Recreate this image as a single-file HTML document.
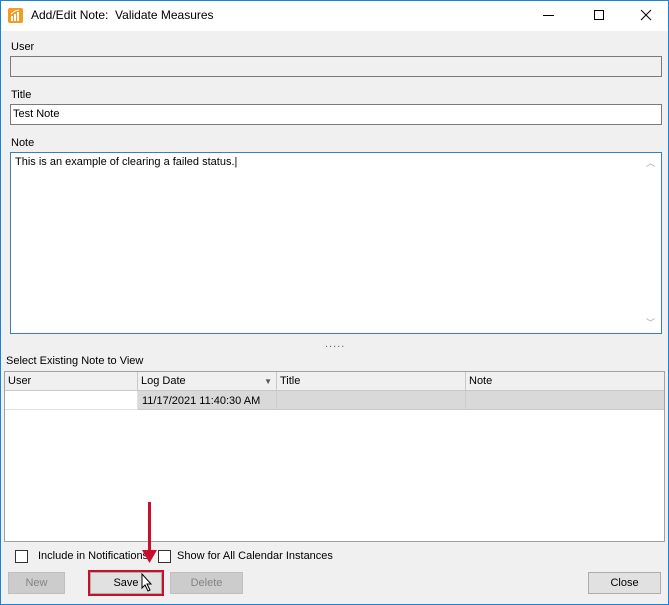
<!DOCTYPE html><html><head><style>
*{box-sizing:border-box;margin:0;padding:0}
body{width:669px;height:605px;overflow:hidden;font-family:"Liberation Sans",sans-serif;font-size:11px;color:#000;background:#f0f0f0;position:relative}
.a{position:absolute}
.win{left:0;top:0;width:669px;height:605px;border:1px solid #1883d7}
.tb{left:1px;top:1px;width:667px;height:30px;background:#fff}
.inp{border:1px solid #7a7a7a;background:#fff}
.btn{border:1px solid #adadad;background:#e1e1e1;text-align:center;line-height:20px;font-size:11px}
.dis{background:#cccccc;border-color:#bfbfbf;color:#838383}
.cb{width:13px;height:13px;border:1px solid #333;background:#fff}
.hd{top:372px;height:19px;border-right:1px solid #c8c8c8;border-bottom:1px solid #c8c8c8;background:#f0f0f0;padding:3px 3px;font-size:11px}
</style></head><body>
<div class="a win"></div>
<div class="a tb"></div>
<div class="a" style="left:8px;top:8px;width:15px;height:15px;background:#f59a23;border-radius:2px"></div>
<svg class="a" style="left:8px;top:8px" width="15" height="15"><rect x="3" y="8" width="2" height="5" fill="#fff"/><rect x="6" y="6" width="2" height="7" fill="#fff"/><rect x="9" y="4" width="2" height="9" fill="#fff"/><path d="M3 6 L7 3 L11 2" stroke="#fff" fill="none"/></svg>
<div class="a" style="left:31px;top:8px;font-size:12px">Add/Edit Note:&nbsp; Validate Measures</div>
<div class="a" style="left:543px;top:15px;width:11px;height:1px;background:#000"></div>
<div class="a" style="left:594px;top:10px;width:10px;height:10px;border:1px solid #000"></div>
<svg class="a" style="left:640px;top:9px" width="12" height="12"><path d="M1 1L11 11M11 1L1 11" stroke="#000" stroke-width="1"/></svg>
<div class="a" style="left:11px;top:41px">User</div>
<div class="a inp" style="left:10px;top:56px;width:652px;height:21px;background:#f0f0f0"></div>
<div class="a" style="left:11px;top:89px">Title</div>
<div class="a inp" style="left:10px;top:104px;width:652px;height:21px;padding:3px 2px">Test Note</div>
<div class="a" style="left:11px;top:137px">Note</div>
<div class="a inp" style="left:10px;top:152px;width:652px;height:182px;border-color:#3c7fb1;padding:3px 4px">This is an example of clearing a failed status.|</div>
<div class="a" style="left:646px;top:156px;color:#a0a0a0;font-size:9px">︿</div>
<div class="a" style="left:646px;top:316px;color:#a0a0a0;font-size:9px">﹀</div>
<div class="a" style="left:325px;top:338px;color:#666;letter-spacing:1px">.....</div>
<div class="a" style="left:6px;top:355px">Select Existing Note to View</div>
<div class="a" style="left:4px;top:371px;width:661px;height:171px;border:1px solid #a0a0a0;background:#fff"></div>
<div class="a hd" style="left:5px;width:133px">User</div>
<div class="a hd" style="left:138px;width:139px">Log Date<span style="position:absolute;right:4px;top:5px;font-size:8px;color:#555">▼</span></div>
<div class="a hd" style="left:277px;width:189px">Title</div>
<div class="a hd" style="left:466px;width:198px;border-right:none">Note</div>
<div class="a" style="left:138px;top:391px;width:526px;height:19px;background:#d9d9d9;border-bottom:1px solid #c8c8c8"></div>
<div class="a" style="left:5px;top:391px;width:133px;height:19px;border-bottom:1px solid #e0e0e0;border-right:1px solid #e0e0e0"></div>
<div class="a" style="left:142px;top:395px">11/17/2021 11:40:30 AM</div>
<div class="a" style="left:276px;top:391px;width:1px;height:19px;background:#ccc"></div>
<div class="a" style="left:465px;top:391px;width:1px;height:19px;background:#ccc"></div>
<div class="a cb" style="left:15px;top:550px"></div>
<div class="a" style="left:38px;top:550px">Include in Notifications</div>
<div class="a cb" style="left:158px;top:550px"></div>
<div class="a" style="left:177px;top:550px">Show for All Calendar Instances</div>
<div class="a btn dis" style="left:8px;top:572px;width:57px;height:22px">New</div>
<div class="a btn" style="left:90px;top:572px;width:72px;height:22px">Save</div>
<div class="a" style="left:88px;top:570px;width:76px;height:26px;border:2px solid #c8102e"></div>
<div class="a btn dis" style="left:170px;top:572px;width:73px;height:22px">Delete</div>
<div class="a btn" style="left:588px;top:572px;width:73px;height:22px">Close</div>
<svg class="a" style="left:140px;top:500px" width="20" height="66"><rect x="8" y="2" width="3" height="50" fill="#c8102e"/><path d="M2 50 L17 50 L9.5 63Z" fill="#c8102e"/></svg>
<svg class="a" style="left:141px;top:573px" width="14" height="20"><path d="M1 1 L1 15 L4 12 L7 18 L9 17 L6 11 L10 11Z" fill="#fff" stroke="#000"/></svg>
</body></html>
